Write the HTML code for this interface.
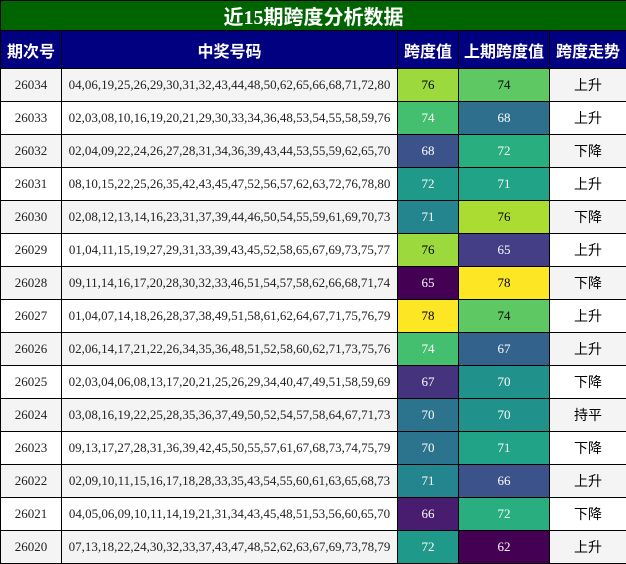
<!DOCTYPE html>
<html><head><meta charset="utf-8"><style>
*{margin:0;padding:0;box-sizing:border-box}
body{width:626px;height:562px;background:#fff;overflow:hidden;font-family:"Liberation Serif","Noto Serif CJK SC",serif}
table{border-collapse:collapse;width:626px;table-layout:fixed}
td,th{border:1px solid #000;text-align:center;vertical-align:middle}
.title{height:29px;background:#006400;color:#fff;font-size:20px;font-weight:bold;font-family:"Liberation Serif","Noto Sans CJK SC",serif;border:1px solid #000}
th{height:38px;background:#000080;color:#fff;font-size:16px;font-family:"Liberation Sans","Noto Sans CJK SC",sans-serif;font-weight:bold}
td{height:33px;font-size:13px;color:#222}
tr.a td{background:#f4f4f4}
td.t{font-family:"Liberation Sans","Noto Sans CJK SC",sans-serif;font-size:14px;color:#000}
.w{color:#fff!important}
.k{color:#000!important}
</style></head><body>
<table>
<colgroup><col style="width:61px"><col style="width:336px"><col style="width:61px"><col style="width:91px"><col style="width:77px"></colgroup>
<tr><td colspan="5" class="title" style="height:29px">近15期跨度分析数据</td></tr>
<tr><th>期次号</th><th>中奖号码</th><th>跨度值</th><th>上期跨度值</th><th>跨度走势</th></tr>
<tr class="a"><td>26034</td><td>04,06,19,25,26,29,30,31,32,43,44,48,50,62,65,66,68,71,72,80</td><td class="k" style="background:#9bd93c">76</td><td class="k" style="background:#5ec962">74</td><td class="t">上升</td></tr>
<tr><td>26033</td><td>02,03,08,10,16,19,20,21,29,30,33,34,36,48,53,54,55,58,59,76</td><td class="w" style="background:#44bf70">74</td><td class="w" style="background:#2e6f8e">68</td><td class="t">上升</td></tr>
<tr class="a"><td>26032</td><td>02,04,09,22,24,26,27,28,31,34,36,39,43,44,53,55,59,62,65,70</td><td class="w" style="background:#3b528b">68</td><td class="w" style="background:#29af7f">72</td><td class="t">下降</td></tr>
<tr><td>26031</td><td>08,10,15,22,25,26,35,42,43,45,47,52,56,57,62,63,72,76,78,80</td><td class="w" style="background:#1f9a8a">72</td><td class="w" style="background:#20a386">71</td><td class="t">上升</td></tr>
<tr class="a"><td>26030</td><td>02,08,12,13,14,16,23,31,37,39,44,46,50,54,55,59,61,69,70,73</td><td class="w" style="background:#25858e">71</td><td class="k" style="background:#aadc32">76</td><td class="t">下降</td></tr>
<tr><td>26029</td><td>01,04,11,15,19,27,29,31,33,39,43,45,52,58,65,67,69,73,75,77</td><td class="k" style="background:#9bd93c">76</td><td class="w" style="background:#433e85">65</td><td class="t">上升</td></tr>
<tr class="a"><td>26028</td><td>09,11,14,16,17,20,28,30,32,33,46,51,54,57,58,62,66,68,71,74</td><td class="w" style="background:#440154">65</td><td class="k" style="background:#fde725">78</td><td class="t">下降</td></tr>
<tr><td>26027</td><td>01,04,07,14,18,26,28,37,38,49,51,58,61,62,64,67,71,75,76,79</td><td class="k" style="background:#fde725">78</td><td class="k" style="background:#5ec962">74</td><td class="t">上升</td></tr>
<tr class="a"><td>26026</td><td>02,06,14,17,21,22,26,34,35,36,48,51,52,58,60,62,71,73,75,76</td><td class="w" style="background:#44bf70">74</td><td class="w" style="background:#33638d">67</td><td class="t">上升</td></tr>
<tr><td>26025</td><td>02,03,04,06,08,13,17,20,21,25,26,29,34,40,47,49,51,58,59,69</td><td class="w" style="background:#46337e">67</td><td class="w" style="background:#21918c">70</td><td class="t">下降</td></tr>
<tr class="a"><td>26024</td><td>03,08,16,19,22,25,28,35,36,37,49,50,52,54,57,58,64,67,71,73</td><td class="w" style="background:#2c738e">70</td><td class="w" style="background:#21918c">70</td><td class="t">持平</td></tr>
<tr><td>26023</td><td>09,13,17,27,28,31,36,39,42,45,50,55,57,61,67,68,73,74,75,79</td><td class="w" style="background:#2c738e">70</td><td class="w" style="background:#20a386">71</td><td class="t">下降</td></tr>
<tr class="a"><td>26022</td><td>02,09,10,11,15,16,17,18,28,33,35,43,54,55,60,61,63,65,68,73</td><td class="w" style="background:#25858e">71</td><td class="w" style="background:#3b528b">66</td><td class="t">上升</td></tr>
<tr><td>26021</td><td>04,05,06,09,10,11,14,19,21,31,34,43,45,48,51,53,56,60,65,70</td><td class="w" style="background:#481c6e">66</td><td class="w" style="background:#29af7f">72</td><td class="t">下降</td></tr>
<tr class="a"><td>26020</td><td>07,13,18,22,24,30,32,33,37,43,47,48,52,62,63,67,69,73,78,79</td><td class="w" style="background:#1f9a8a">72</td><td class="w" style="background:#440154">62</td><td class="t">上升</td></tr>
</table>
</body></html>
